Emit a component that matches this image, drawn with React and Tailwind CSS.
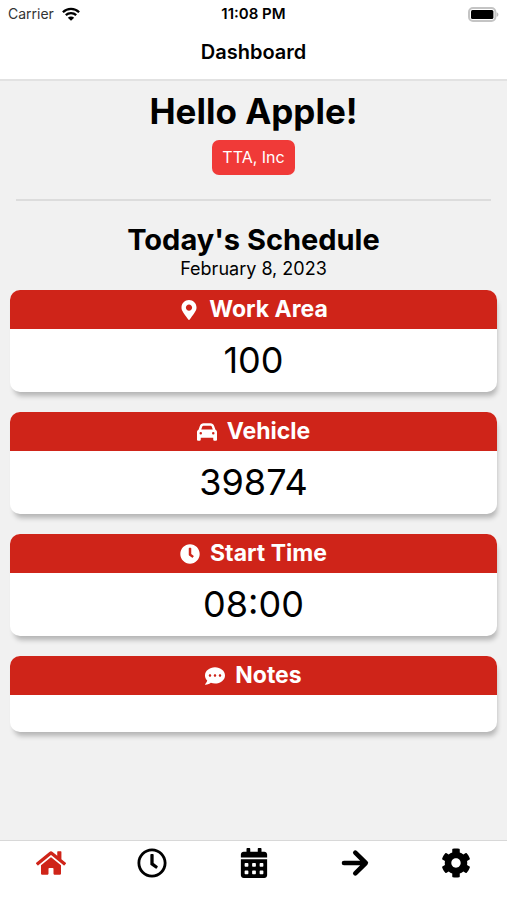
import React from 'react';
import {
  FaCalendarAlt,
  FaClock,
  FaCog,
  FaCommentDots,
  FaHome,
  FaMapMarkerAlt,
  FaRegClock,
} from 'react-icons/fa';
import { FaCar } from 'react-icons/fa6';

const CARDS = [
  { title: 'Work Area', icon: FaMapMarkerAlt, value: '100' },
  { title: 'Vehicle', icon: FaCar, value: '39874' },
  { title: 'Start Time', icon: FaClock, value: '08:00' },
  { title: 'Notes', icon: FaCommentDots, value: '' },
];

const TABS = [
  { label: 'Home', icon: FaHome, active: true },
  { label: 'Time', icon: FaRegClock },
  { label: 'Calendar', icon: FaCalendarAlt },
  { label: 'Next', icon: ArrowIcon },
  { label: 'Settings', icon: FaCog },
];

function ArrowIcon({ size }) {
  return (
    <svg
      width={size}
      height={size}
      viewBox="0 0 30 30"
      fill="none"
      stroke="currentColor"
      strokeWidth="4.6"
      strokeLinecap="round"
      strokeLinejoin="round"
      aria-hidden="true"
    >
      <path d="M4 15H25.5M15.3 4.6L25.8 15L15.3 25.4" />
    </svg>
  );
}

function WifiIcon() {
  return (
    <svg width="18" height="14" viewBox="0 0 18 14" aria-hidden="true">
      <g fill="none" stroke="#000" strokeWidth="2.3">
        <path d="M0.9 5.2C5.4 0.8 12.6 0.8 17.1 5.2" />
        <path d="M3.8 8.2C6.7 5.4 11.3 5.4 14.2 8.2" />
      </g>
      <path d="M9 13.8L5.8 10.7C7.6 9.1 10.4 9.1 12.2 10.7Z" />
    </svg>
  );
}

function BatteryIcon() {
  return (
    <svg width="31" height="15" viewBox="0 0 31 15" aria-hidden="true">
      <rect x="1" y="1" width="26.4" height="13" rx="4" fill="#fff" stroke="#c4c4c4" strokeWidth="2" />
      <rect x="3" y="3" width="22.4" height="9" rx="1.5" />
      <path d="M28.6 5.2C31 6 31 9 28.6 9.8Z" fill="#bdbdbd" />
    </svg>
  );
}

function StatusBar() {
  return (
    <div className="grid grid-cols-3 items-center h-7 px-2 text-sm">
      <div className="flex items-center gap-2 text-[#333]">
        Carrier
        <WifiIcon />
      </div>
      <div className="text-center text-[15px] font-semibold">11:08 PM</div>
      <div className="flex justify-end">
        <BatteryIcon />
      </div>
    </div>
  );
}

function Card({ title, icon: Icon, value }) {
  return (
    <section className="rounded-[10px] overflow-hidden bg-white shadow-[2px_6px_5px_-2px_rgba(0,0,0,0.25)]">
      <h3 className="flex items-center justify-center gap-2.5 h-[39px] bg-[#cf2419] text-white text-[23px] font-bold">
        <Icon size={20} />
        {title}
      </h3>
      {value ? (
        <p className="h-[63px] text-center text-4xl leading-[63px]">{value}</p>
      ) : (
        <div className="h-[37px]" />
      )}
    </section>
  );
}

function TabBar() {
  return (
    <nav className="flex h-[60px] bg-white border-t border-[#d8d8d8]">
      {TABS.map(({ label, icon: Icon, active }) => (
        <button
          key={label}
          type="button"
          aria-label={label}
          className={`flex-1 flex justify-center pt-[7px] ${
            active ? 'text-[#cf2419]' : 'text-black'
          }`}
        >
          <Icon size={30} />
        </button>
      ))}
    </nav>
  );
}

export default function App() {
  return (
    <div className="min-h-screen flex flex-col bg-[#f1f1f1] text-black font-['Inter',sans-serif]">
      <header className="bg-white border-b-2 border-[#e2e2e2]">
        <StatusBar />
        <h1 className="h-[51px] text-center text-xl leading-[49px] font-semibold">
          Dashboard
        </h1>
      </header>

      <main className="flex-1 px-[10px] pt-2">
        <div className="flex flex-col items-center">
          <h2 className="text-[35px] leading-[44px] font-bold">Hello Apple!</h2>
          <span className="mt-[7px] px-[10px] rounded-[7px] bg-[#f03a38] text-white text-base leading-[35px]">
            TTA, Inc
          </span>
        </div>

        <hr className="mx-1.5 mt-6 border-t-2 border-[#dcdcdc]" />

        <div className="pt-5 text-center">
          <h2 className="text-[29px] leading-[38px] font-bold">Today's Schedule</h2>
          <p className="text-lg leading-5">February 8, 2023</p>
        </div>

        <div className="mt-[11px] flex flex-col gap-5">
          {CARDS.map((card) => (
            <Card key={card.title} {...card} />
          ))}
        </div>
      </main>

      <TabBar />
    </div>
  );
}
